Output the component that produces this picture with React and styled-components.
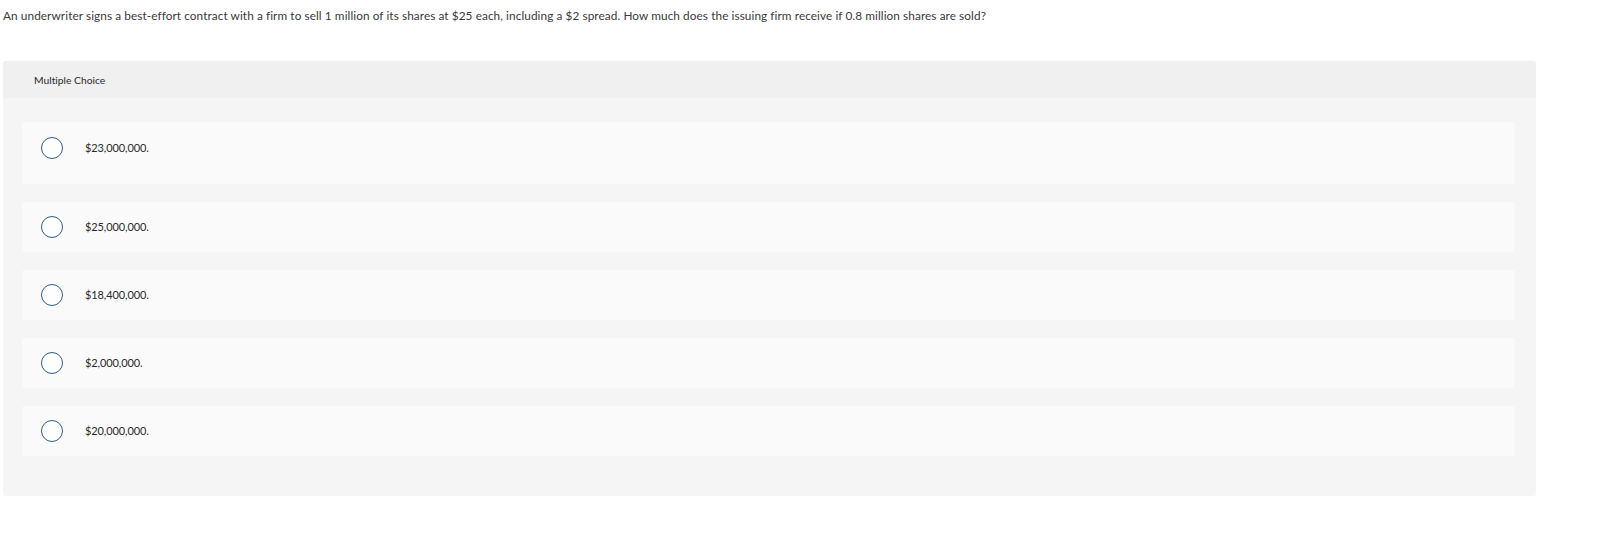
import React from "react"
import styled, { createGlobalStyle } from "styled-components"

const GlobalStyle = createGlobalStyle`
  body {
    margin: 0;
    background: #fff;
    font-family: Lato, "Open Sans", Arial, sans-serif;
    font-variant-ligatures: none;
    color: #333;
  }
`

const Page = styled.div`
  padding: 6px 3px 0;
`

const Question = styled.p`
  margin: 0 0 35px;
  font-size: 11.8px;
  line-height: 20px;
  letter-spacing: 0.08px;
  color: #3a3a3a;
`

const Panel = styled.div`
  width: 1533px;
  background: #f5f5f5;
  border-radius: 3px;
  overflow: hidden;
`

const PanelHeader = styled.div`
  height: 37px;
  display: flex;
  align-items: center;
  padding-left: 31px;
  background: #f0f0f0;
  font-size: 10.3px;
  color: #2a2a2a;
`

const Choices = styled.div`
  display: flex;
  flex-direction: column;
  gap: 18px;
  padding: 24px 21px 40px 19px;
`

const Choice = styled.label`
  display: flex;
  align-items: ${(p) => (p.$tall ? "flex-start" : "center")};
  height: ${(p) => (p.$tall ? "62px" : "50px")};
  padding: ${(p) => (p.$tall ? "15px 0 0 19px" : "0 0 0 19px")};
  box-sizing: border-box;
  background: #fafafa;
  border-radius: 3px;
  cursor: pointer;
`

const Radio = styled.span`
  width: 22px;
  height: 22px;
  box-sizing: border-box;
  border: 1.5px solid #2b5d8e;
  border-radius: 50%;
  background: #fff;
  flex-shrink: 0;
`

const ChoiceText = styled.span`
  margin-left: 22px;
  font-size: 11px;
  color: #2a2a2a;
  letter-spacing: -0.1px;
  line-height: 22px;
`

const options = [
  "$23,000,000.",
  "$25,000,000.",
  "$18,400,000.",
  "$2,000,000.",
  "$20,000,000.",
]

const App = () => (
  <Page>
    <GlobalStyle />
    <Question>
      An underwriter signs a best-effort contract with a firm to sell 1 million of its shares at $25
      each, including a $2 spread. How much does the issuing firm receive if 0.8 million shares are
      sold?
    </Question>
    <Panel>
      <PanelHeader>Multiple Choice</PanelHeader>
      <Choices>
        {options.map((o, i) => (
          <Choice key={o} $tall={i === 0}>
            <Radio />
            <ChoiceText>{o}</ChoiceText>
          </Choice>
        ))}
      </Choices>
    </Panel>
  </Page>
)

export default App
